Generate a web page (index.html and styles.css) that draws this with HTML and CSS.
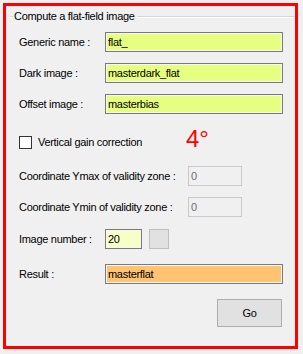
FILE: index.html
```html
<!DOCTYPE html>
<html lang="en">
<head>
    <meta charset="UTF-8">
    <meta name="viewport" content="width=device-width, initial-scale=1.0">
    <title>Flat-field image</title>
    <link rel="stylesheet" href="styles.css">
</head>
<body>
    <div class="frame">
        <div class="group-title">
            <span class="rule rule-start"></span>
            <span class="title-text">Compute a flat-field image</span>
            <span class="rule rule-end"></span>
        </div>

        <div class="fields">
            <div class="row row-first">
                <label class="field-label" for="genericName">Generic name :</label>
                <input class="text-box filled-green" type="text" id="genericName" value="flat_">
            </div>
            <div class="row">
                <label class="field-label" for="darkImage">Dark image :</label>
                <input class="text-box filled-green" type="text" id="darkImage" value="masterdark_flat">
            </div>
            <div class="row">
                <label class="field-label" for="offsetImage">Offset image :</label>
                <input class="text-box filled-green" type="text" id="offsetImage" value="masterbias">
            </div>
            <div class="row row-check">
                <input class="check-box" type="checkbox" id="verticalGain">
                <label class="check-label" for="verticalGain">Vertical gain correction</label>
                <span class="degree">4°</span>
            </div>
            <div class="row row-ymax">
                <label class="field-label wide-label" for="ymax">Coordinate Ymax of validity zone :</label>
                <input class="text-box small-box" type="text" id="ymax" value="0" disabled>
            </div>
            <div class="row">
                <label class="field-label wide-label" for="ymin">Coordinate Ymin of validity zone :</label>
                <input class="text-box small-box" type="text" id="ymin" value="0" disabled>
            </div>
            <div class="row row-number">
                <label class="field-label" for="imageNumber">Image number :</label>
                <input class="text-box number-box" type="text" id="imageNumber" value="20">
                <button class="square-button" type="button" disabled></button>
            </div>
            <div class="row row-result">
                <label class="field-label" for="result">Result :</label>
                <input class="text-box filled-orange" type="text" id="result" value="masterflat">
            </div>
            <div class="actions">
                <button class="go-button" type="button">Go</button>
            </div>
        </div>
    </div>
</body>
</html>
```

FILE: styles.css
```css
body {
    margin: 0;
    background-color: #f0f0f0;
    font-family: "Liberation Sans", Arial, sans-serif;
    font-size: 11px;
    letter-spacing: -0.3px;
    color: #000;
}
.frame {
    box-sizing: border-box;
    width: 295px;
    height: 346px;
    margin: 3px;
    border: 3px solid #ff0000;
    overflow: hidden;
}
.group-title {
    display: flex;
    align-items: center;
    height: 13px;
    line-height: 13px;
    margin: 4px 0 0 4px;
}
.rule {
    height: 1px;
    border-bottom: 1px solid #fff;
    background-color: #d5d5d5;
}
.rule-start {
    width: 3px;
    margin-right: 1px;
}
.rule-end {
    flex: 1;
    margin-left: 2px;
}
.title-text {
    white-space: nowrap;
}
.fields {
    display: flex;
    flex-direction: column;
    padding: 0 12px 0 13px;
}
.row {
    display: flex;
    align-items: center;
    height: 20px;
    margin-top: 11px;
}
.row-first {
    margin-top: 9px;
}
.row-check {
    margin-top: 18px;
}
.row-ymax {
    margin-top: 14px;
}
.row-number {
    margin-top: 12px;
}
.row-result {
    margin-top: 15px;
}
.field-label {
    width: 86px;
    flex-shrink: 0;
    white-space: nowrap;
}
.wide-label {
    width: 169px;
}
.text-box {
    box-sizing: border-box;
    height: 20px;
    margin: 0;
    padding: 0 0 0 2px;
    border: 1px solid #7a7a7a;
    box-shadow: inset 0 0 0 1px #f6f6f6;
    font-family: inherit;
    font-size: 11px;
    letter-spacing: -0.3px;
    color: #000;
    outline: none;
}
.filled-green {
    flex: 1;
    min-width: 0;
    background-color: #e6ff80;
}
.filled-orange {
    flex: 1;
    min-width: 0;
    background-color: #ffc372;
}
.small-box {
    width: 54px;
    border-color: #c9c9c9;
    box-shadow: none;
    background-color: #f0f0f0;
    color: #6d6d6d;
}
.number-box {
    width: 37px;
    background-color: #f8ffc6;
}
.square-button {
    box-sizing: border-box;
    width: 20px;
    height: 20px;
    margin: 0 0 0 7px;
    padding: 0;
    border: 1px solid #bfbfbf;
    background-color: #e1e1e1;
}
.check-box {
    appearance: none;
    -webkit-appearance: none;
    box-sizing: border-box;
    width: 13px;
    height: 13px;
    margin: 0;
    border: 1px solid #333;
    background-color: #fff;
}
.check-label {
    width: 148px;
    margin-left: 6px;
    white-space: nowrap;
}
.degree {
    margin-bottom: 6px;
    font-size: 24px;
    line-height: 24px;
    letter-spacing: 0;
    color: #ff0000;
}
.actions {
    display: flex;
    justify-content: flex-end;
    margin-top: 15px;
    padding-right: 1px;
}
.go-button {
    box-sizing: border-box;
    width: 65px;
    height: 28px;
    margin: 0;
    border: 1px solid #adadad;
    background-color: #e1e1e1;
    font-family: inherit;
    font-size: 11px;
    letter-spacing: -0.3px;
    color: #000;
}
```
